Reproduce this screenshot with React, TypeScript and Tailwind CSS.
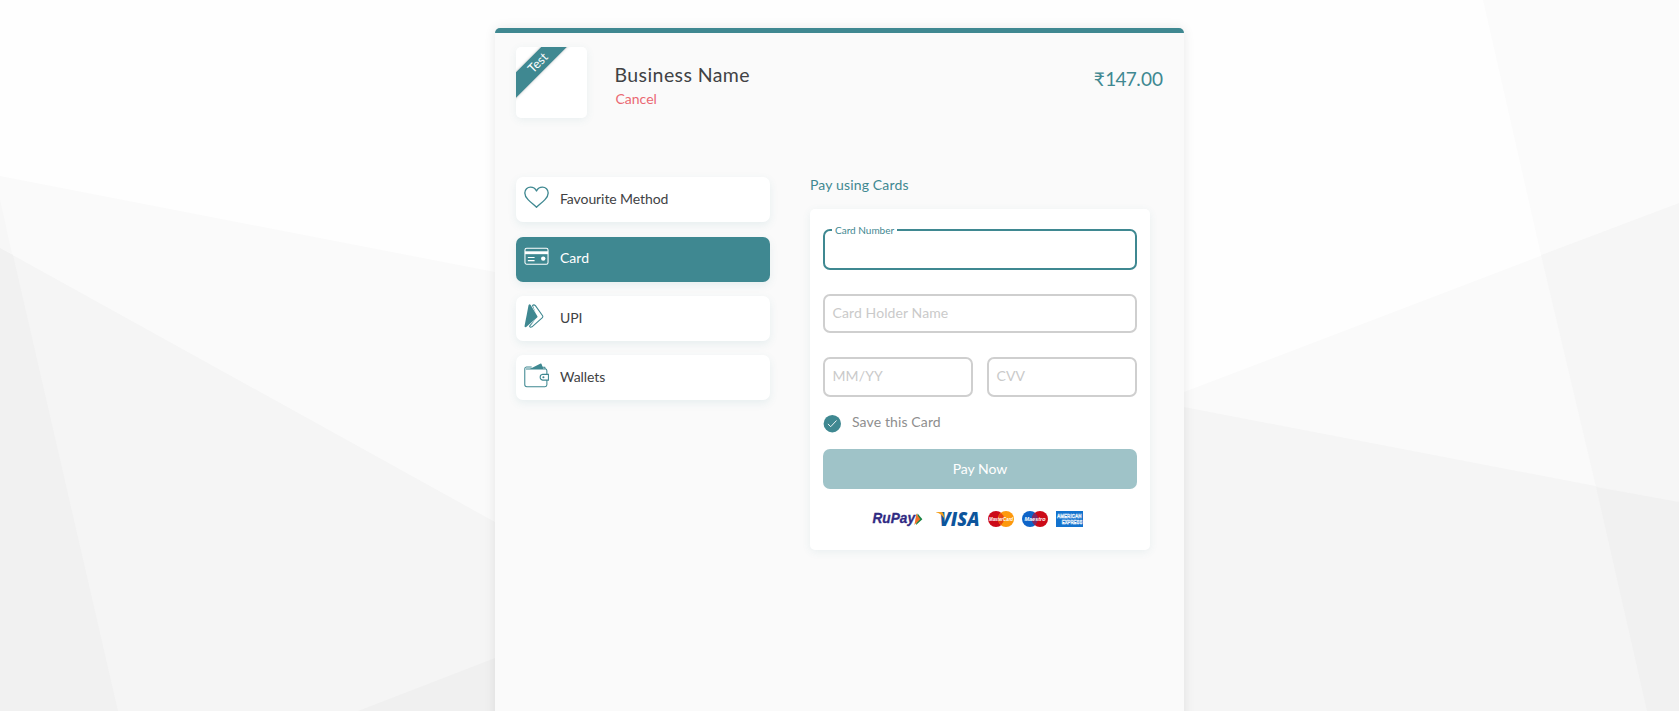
import type { ReactNode } from "react";

const TEAL = "#3f8891";

function Backdrop() {
  return (
    <svg className="absolute inset-0" width="1679" height="711" viewBox="0 0 1679 711" aria-hidden="true">
      <rect width="1679" height="711" fill="#fefefe" />
      <path d="M0 176L495 272V711H0Z" fill="#fafafa" />
      <path d="M0 199L12 254L0 248Z" fill="#f7f7f7" />
      <path d="M0 248L495 522V711H0Z" fill="#f5f5f5" />
      <path d="M0 248L13 255L118 711H0Z" fill="#f1f1f1" />
      <path d="M358 711L495 658V711Z" fill="#f0f0f0" />
      <path d="M1483 0H1679V203L1541 255Z" fill="#fbfbfb" />
      <path d="M1184 392L1679 203V711H1184Z" fill="#fafafa" />
      <path d="M1541 255L1679 203V502L1596 487Z" fill="#f6f6f6" />
      <path d="M1184 407L1679 502V711H1184Z" fill="#f5f5f5" />
      <path d="M1596 487L1679 502V711H1647Z" fill="#f1f1f1" />
    </svg>
  );
}

function HeartIcon() {
  return (
    <svg width="25" height="23" viewBox="0 0 26 24" fill="none" stroke={TEAL} strokeWidth="1.4" strokeLinejoin="round">
      <path d="M13 22.2C10.8 20 7 17.2 4.2 14.2C1.8 11.7 0.8 9.6 0.8 7.3C0.8 3.7 3.5 1.2 6.8 1.2C9.6 1.2 11.7 2.6 13 5.2C14.3 2.6 16.4 1.2 19.2 1.2C22.5 1.2 25.2 3.7 25.2 7.3C25.2 9.6 24.2 11.7 21.8 14.2C19 17.2 15.2 20 13 22.2Z" />
    </svg>
  );
}

function CardIcon() {
  return (
    <svg width="25" height="24" viewBox="0 0 26 24" fill="none" stroke="#fff">
      <rect x="1" y="4" width="24" height="16.5" rx="1.8" strokeWidth="1.1" />
      <path d="M1 8.6H25" strokeWidth="3" />
      <path d="M4 13.6H11M4 16.8H11" strokeWidth="1.1" />
      <circle cx="20" cy="14.7" r="2.3" fill="#fff" stroke="none" />
    </svg>
  );
}

function UpiIcon() {
  return (
    <svg width="26" height="24" viewBox="0 0 26 24" fill="none">
      <path d="M8.4 1.8Q9.8 0 11.4 1.6L18.6 11.8Q19.2 12.8 18.4 13.7L8 22.8Q6.2 23.8 5.6 22.2L12.6 13Z" fill="#fff" stroke={TEAL} strokeWidth="1.1" strokeLinejoin="round" />
      <path d="M4.6 1Q5.4 -0.2 6.7 0.9L13.4 12.2Q13.7 12.9 13.1 13.6L2.2 23Q0.4 23.6 0.6 21.8Z" fill={TEAL} stroke="#fff" strokeWidth="1.2" paintOrder="stroke" />
    </svg>
  );
}

function WalletIcon() {
  return (
    <svg width="25" height="25" viewBox="0 0 26 26" fill="none" stroke={TEAL} strokeWidth="1.1">
      <path d="M6 6.2L17.3 0.6Q18.3 0.5 18.6 2L20.3 6.2Z" fill={TEAL} stroke="none" />
      <path d="M23.8 11.8V8Q23.8 6 22 5.9L21.6 4.4H18.6M8 4.2H2.5Q0.8 4.4 0.8 6V22.4Q0.8 24.6 3 24.6H21.8Q23.8 24.6 23.8 22.6V17.8M2 6.2H22" />
      <path d="M25.4 11.8H19.4Q16.8 12.2 16.8 14.8Q16.8 17.4 19.4 17.8H25.4Z" />
      <circle cx="20.2" cy="14.8" r="1.1" fill={TEAL} stroke="none" />
    </svg>
  );
}

function Method({ icon, label, active }: { icon: ReactNode; label: string; active?: boolean }) {
  return (
    <button
      className={
        active
          ? "flex h-[45px] w-[254px] items-center rounded-[7px] bg-[#3f8891] pl-[8px] text-[14px] text-white shadow-[0_3px_8px_rgba(63,136,146,0.10)]"
          : "flex h-[45px] w-[254px] items-center rounded-[7px] bg-white pl-[8px] text-[14px] text-[#414244] shadow-[0_3px_8px_rgba(63,136,146,0.10)]"
      }
    >
      <span className={active ? "mb-[6px] w-[36px]" : "mb-[5px] w-[36px]"}>{icon}</span>
      <span className={active ? "pb-[4px]" : "pb-[2px] tracking-[-0.08px]"}>{label}</span>
    </button>
  );
}

function Field({ label, className }: { label: string; className: string }) {
  return (
    <label className={`flex items-center rounded-[7px] border-2 border-[#cfcfcf] bg-white pl-[7.5px] text-[14px] tracking-[0.1px] text-[#cacaca] ${className}`}>
      {label}
    </label>
  );
}

function RuPay() {
  return (
    <svg className="mr-[13px] overflow-visible" width="51" height="18" viewBox="0 0 51 18">
      <text x="0.5" y="13.2" fill="#302b83" stroke="#302b83" strokeWidth="0.3" fontFamily="Liberation Sans, sans-serif" fontWeight="700" fontStyle="italic" fontSize="14.5" textLength="42.5" lengthAdjust="spacingAndGlyphs">RuPay</text>
      <path d="M45.6 3.6L50.4 9.3L44 15Z" fill="#168544" />
      <path d="M44.4 3.6L48.2 9.3L42.4 15Z" fill="#f26f2b" />
    </svg>
  );
}

function Visa() {
  return (
    <svg className="mr-[8px] overflow-visible" width="44" height="18" viewBox="0 0 44 18">
      <text x="3.5" y="15.8" fill="#0d559c" fontFamily="Open Sans, sans-serif" fontWeight="800" fontStyle="italic" fontSize="19" textLength="40" lengthAdjust="spacingAndGlyphs">VISA</text>
      <path d="M0 1.9H5.4Q6.9 2 7.3 3.4L8.7 9Q6 4 0 2.3Z" fill="#f5a01d" />
    </svg>
  );
}

function Circles({ label, left, right, mid, length }: { label: string; left: string; right: string; mid: string; length: number }) {
  return (
    <svg className="mr-[8px] overflow-visible" width="26" height="16" viewBox="0 0 26 16">
      <circle cx="8" cy="8" r="8" fill={left} />
      <circle cx="18" cy="8" r="8" fill={right} />
      <path d="M13 1.8A8 8 0 0 1 13 14.2A8 8 0 0 1 13 1.8Z" fill={mid} />
      <text x={13 - length / 2} y="10.2" fill="#fff" fontFamily="Liberation Sans, sans-serif" fontWeight="700" fontStyle="italic" fontSize="6" textLength={length} lengthAdjust="spacingAndGlyphs">{label}</text>
    </svg>
  );
}

function Amex() {
  return (
    <svg className="overflow-visible" width="27" height="16" viewBox="0 0 27 16">
      <rect width="27" height="16" fill="#1272ce" />
      <g fill="#1272ce" stroke="#fff" strokeWidth="0.5" fontFamily="Liberation Sans, sans-serif" fontWeight="700" fontSize="5.8">
        <text x="1" y="7.4" textLength="24.5" lengthAdjust="spacingAndGlyphs">AMERICAN</text>
        <text x="5.8" y="13.2" textLength="20.5" lengthAdjust="spacingAndGlyphs">EXPRESS</text>
      </g>
    </svg>
  );
}

export default function App() {
  return (
    <div className="relative h-[711px] w-[1679px] overflow-hidden pt-[28px] pl-[495px] [font-family:Lato,sans-serif]">
      <Backdrop />
      <main className="relative h-[700px] w-[689px] rounded-t-[5px] border-t-[5px] border-[#3f8891] bg-[#fafafa] shadow-[0_0_12px_rgba(0,0,0,0.09)]">
        <header className="flex h-[143px] pt-[14px] pr-[21px] pl-[21px]">
          <div className="relative size-[71px] overflow-hidden rounded-[5px] bg-white shadow-[0_2px_8px_rgba(63,136,146,0.09)]">
            <div className="absolute top-[7px] left-[-28.5px] flex h-[18px] w-[100px] -rotate-45 items-center justify-center bg-[#3f8891] text-[12.5px] text-white shadow-[0_0_3px_rgba(0,0,0,0.25)]">
              <span>Test</span>
            </div>
          </div>
          <div className="ml-[27.5px] flex-1 pt-[16px]">
            <h1 className="text-[19.5px] leading-[24px] tracking-[0.42px] text-[#414244]">Business Name</h1>
            <button className="mt-[2px] block pl-[1px] text-[14px] leading-[20px] text-[#ea6872]">Cancel</button>
          </div>
          <div className="flex pt-[20px] text-[19px] leading-[24px] text-[#3f8891]">
            <span className="mr-[1px] tracking-[-0.5px]">₹</span>
            <span className="tracking-[-0.7px]">147.</span>
            <span className="pl-[1px]">00</span>
          </div>
        </header>
        <div className="flex pl-[21px]">
          <nav className="flex w-[294px] flex-col gap-[14.4px] pt-[1.2px]">
            <Method icon={<HeartIcon />} label="Favourite Method" />
            <Method icon={<CardIcon />} label="Card" active />
            <Method icon={<UpiIcon />} label="UPI" />
            <Method icon={<WalletIcon />} label="Wallets" />
          </nav>
          <section className="w-[340px]">
            <h2 className="h-[33px] text-[14px] leading-[18px] tracking-[0.15px] text-[#3f8891]">Pay using Cards</h2>
            <div className="h-[341px] rounded-[5px] bg-white px-[13px] pt-[20px] shadow-[0_2px_9px_rgba(63,136,146,0.09)]">
              <div className="relative h-[41px] rounded-[7px] border-2 border-[#3f8891] bg-white">
                <label className="absolute top-[-8px] left-[7px] bg-white px-[3px] text-[10px] leading-[14px] text-[#3f8891]">Card Number</label>
              </div>
              <Field label="Card Holder Name" className="mt-[24px] h-[39px] pb-[2px]" />
              <div className="mt-[24px] flex gap-[14px]">
                <Field label="MM/YY" className="h-[40px] flex-1 pb-[4px]" />
                <Field label="CVV" className="h-[40px] flex-1 pb-[4px]" />
              </div>
              <div className="mt-[17px] flex h-[20px] text-[14px] text-[#8e8e8e]">
                <svg className="mt-[1px] mr-[11px]" width="18" height="18" viewBox="0 0 18 18">
                  <circle cx="9.3" cy="8.7" r="8.7" fill={TEAL} />
                  <path d="M4.9 8.9L7.7 11.7L13.5 5.5" fill="none" stroke="#fff" strokeWidth="0.9" />
                </svg>
                <span className="leading-[16px] tracking-[0.12px]">Save this Card</span>
              </div>
              <button className="mt-[15px] flex h-[40px] w-full items-center justify-center rounded-[7px] bg-[#9fc3c8] pb-[2px] text-[14px] text-white">Pay Now</button>
              <div className="mt-[20.5px] flex items-center pl-[49px]">
                <RuPay />
                <Visa />
                <Circles label="MasterCard" left="#cc0a18" right="#fd990d" mid="#e6470f" length={24} />
                <Circles label="Maestro" left="#0e64c8" right="#cc0a18" mid="#7b2b66" length={21} />
                <Amex />
              </div>
            </div>
          </section>
        </div>
      </main>
    </div>
  );
}
